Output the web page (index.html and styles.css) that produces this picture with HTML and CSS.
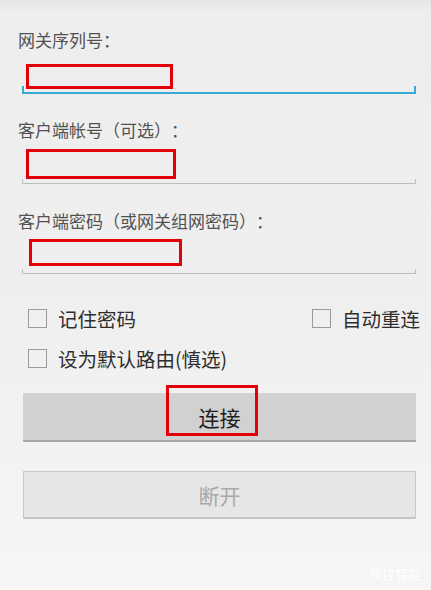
FILE: index.html
```html
<!DOCTYPE html>
<html lang="zh-CN">
<head>
    <meta charset="UTF-8">
    <meta name="viewport" content="width=device-width, initial-scale=1.0">
    <title>网关连接</title>
    <link rel="stylesheet" href="styles.css">
</head>
<body>
    <div class="screen">
        <div class="field">
            <div class="field-label">网关序列号：</div>
            <div class="input input-focus">
                <div class="mark mark-serial"></div>
            </div>
        </div>

        <div class="field field-account">
            <div class="field-label">客户端帐号（可选）：</div>
            <div class="input">
                <div class="mark mark-account"></div>
            </div>
        </div>

        <div class="field field-password">
            <div class="field-label">客户端密码（或网关组网密码）：</div>
            <div class="input">
                <div class="mark mark-password"></div>
            </div>
        </div>

        <div class="options">
            <div class="option-row">
                <label class="check"><span class="box"></span>记住密码</label>
                <label class="check"><span class="box"></span>自动重连</label>
            </div>
            <div class="option-row">
                <label class="check"><span class="box"></span>设为默认路由(慎选)</label>
            </div>
        </div>

        <button class="btn btn-connect">连接<span class="mark mark-connect"></span></button>
        <button class="btn btn-disconnect" disabled>断开</button>

        <div class="watermark">辰控智能</div>
    </div>
</body>
</html>
```

FILE: styles.css
```css
html, body {
    margin: 0;
    padding: 0;
}

body {
    font-family: "Noto Sans CJK SC", "Noto Sans", sans-serif;
    background: linear-gradient(#e6e6e6 0, #eeeeee 12px, #efefef 300px, #f6f6f6 590px);
    color: #333;
    width: 431px;
    height: 590px;
    overflow: hidden;
}

.screen {
    position: relative;
    height: 590px;
    padding-top: 30px;
    box-sizing: border-box;
}

/* text fields */

.field-label {
    padding-left: 18px;
    font-size: 17px;
    line-height: 20px;
    height: 20px;
    color: #525252;
    white-space: nowrap;
    text-spacing-trim: space-all;
    font-feature-settings: "fwid" 1;
}

.field-account { margin-top: 26px; }
.field-password { margin-top: 27px; }

.input {
    position: relative;
    margin: 0 15px 0 22px;
    height: 44px;
    box-sizing: border-box;
    border-bottom: 1px solid #bdbdbd;
    padding: 9px 0 0 4px;
}

.input::before,
.input::after {
    content: "";
    position: absolute;
    bottom: 0;
    width: 1px;
    height: 4px;
    background: #bdbdbd;
}

.input::before { left: 0; }
.input::after { right: 0; }

.input-focus {
    border-bottom: 2px solid #38abd4;
    padding-top: 14px;
}

.input-focus::before,
.input-focus::after {
    width: 2px;
    height: 6px;
    background: #38abd4;
}

.field-password .input {
    height: 43px;
    padding: 8px 0 0 7px;
}

/* red annotation boxes */

.mark {
    display: block;
    box-sizing: border-box;
    border: 3px solid #e3000b;
}

.mark-serial {
    width: 147px;
    height: 25px;
}

.mark-account {
    width: 150px;
    height: 30px;
}

.mark-password {
    width: 153px;
    height: 27px;
}

/* check boxes */

.options {
    padding-top: 24px;
}

.option-row {
    display: flex;
    justify-content: space-between;
    align-items: center;
    height: 40px;
    padding: 0 11px 0 28px;
}

.check {
    display: flex;
    align-items: center;
    font-size: 19.5px;
    color: #2e2e2e;
    white-space: nowrap;
}

.box {
    width: 19px;
    height: 19px;
    box-sizing: border-box;
    border: 1.5px solid #9b9b9b;
    margin-right: 11px;
}

/* buttons */

.btn {
    display: block;
    position: relative;
    margin: 15px 15px 0 23px;
    width: 393px;
    height: 49px;
    box-sizing: border-box;
    font-family: inherit;
    font-size: 21px;
    border-radius: 1px;
    padding: 0;
}

.btn-connect {
    background: #d1d1d1;
    color: #1c1c1c;
    border: none;
    border-bottom: 2px solid #a9a9a9;
}

.mark-connect {
    position: absolute;
    left: 143px;
    top: -8px;
    width: 92px;
    height: 51px;
}

.btn-disconnect {
    margin-top: 29px;
    height: 48px;
    background: #e6e6e6;
    color: #a9a9a9;
    border: 1px solid #c9c9c9;
    border-bottom: 2px solid #c4c4c4;
}

.watermark {
    position: absolute;
    left: 369px;
    top: 564px;
    font-size: 13px;
    font-weight: bold;
    color: #ffffff;
    text-shadow: 0 0 1px rgba(0, 0, 0, 0.08);
}
```
